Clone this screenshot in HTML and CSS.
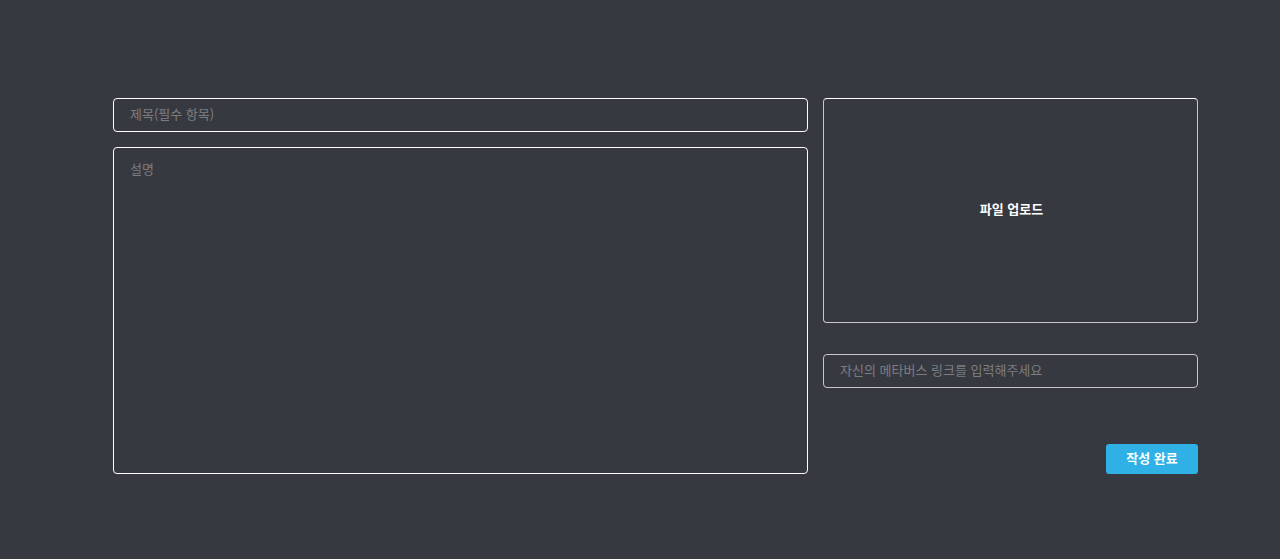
FILE: index.html
```html
<!DOCTYPE html>
<html lang="ko">
<head>
    <meta charset="UTF-8">
    <meta name="viewport" content="width=device-width, initial-scale=1.0">
    <title>글 작성</title>
    <link rel="stylesheet" href="styles.css">
</head>
<body>
    <main class="write-page">
        <section class="write-main">
            <input type="text" class="field title-input" placeholder="제목(필수 항목)" />
            <textarea class="field desc-input" placeholder="설명"></textarea>
        </section>

        <aside class="write-side">
            <div class="upload-box">파일 업로드</div>
            <input type="text" class="field link-input" placeholder="자신의 메타버스 링크를 입력해주세요" />
            <div class="submit-row">
                <button type="button" class="submit-btn">작성 완료</button>
            </div>
        </aside>
    </main>
</body>
</html>
```

FILE: styles.css
```css
:root {
    --bg-color: #373940;
    --line-color: #ffffff;
    --soft-line: #c8c8cc;
    --placeholder: #7d7d80;
    --accent: #2fb1e6;
}

* {
    box-sizing: border-box;
    margin: 0;
    padding: 0;
}

html, body {
    height: 100%;
}

body {
    font-family: "Noto Sans CJK KR", "Noto Sans", sans-serif;
    background-color: var(--bg-color);
    color: white;
    font-size: 13px;
}

.write-page {
    display: grid;
    grid-template-columns: 695px 375px;
    gap: 15px;
    padding: 98px 0 0 113px;
}

.write-main {
    display: flex;
    flex-direction: column;
    gap: 15px;
}

.field {
    width: 100%;
    background: transparent;
    border: 1px solid var(--line-color);
    border-radius: 4px;
    color: white;
    font-family: inherit;
    font-size: 13px;
    padding: 0 16px 3px;
    outline: none;
}

.field::placeholder {
    color: var(--placeholder);
}

.title-input,
.link-input {
    height: 34px;
}

.desc-input {
    height: 327px;
    resize: none;
    padding: 11px 16px;
    line-height: 19px;
}

.write-side {
    display: flex;
    flex-direction: column;
}

.upload-box {
    height: 225px;
    border: 1px solid var(--soft-line);
    border-top-color: var(--line-color);
    border-radius: 4px;
    display: flex;
    align-items: center;
    justify-content: center;
    font-weight: bold;
    cursor: pointer;
    padding: 0 0 4px 2px;
}

.link-input {
    margin-top: 31px;
    border-color: var(--soft-line);
}

.submit-row {
    display: flex;
    justify-content: flex-end;
    margin-top: 56px;
}

.submit-btn {
    width: 92px;
    height: 30px;
    background-color: var(--accent);
    color: white;
    border: none;
    border-radius: 3px;
    font-family: inherit;
    font-size: 13px;
    font-weight: bold;
    padding-bottom: 4px;
    cursor: pointer;
}
```
